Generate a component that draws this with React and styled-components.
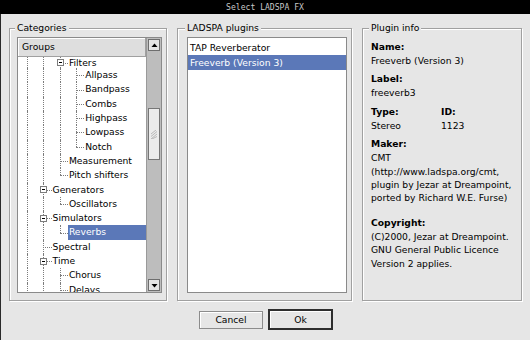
import React from 'react'
import styled, { createGlobalStyle } from 'styled-components'

const GlobalStyle = createGlobalStyle`
  html, body {
    margin: 0;
    padding: 0;
    background: #e6e6e6;
  }
  body {
    font-family: "DejaVu Sans", "Liberation Sans", sans-serif;
    font-size: 9.2px;
    color: #000;
  }
  #root {
    width: 530px;
    height: 340px;
    overflow: hidden;
  }
`

// the tree is scrolled, so the first visible row is partly hidden under the header
const tree = [
  { label: 'Filters', cols: ['line', 'line', 'open'], clipped: true },
  { label: 'Allpass', cols: ['line', 'line', 'line', 'tee'] },
  { label: 'Bandpass', cols: ['line', 'line', 'line', 'tee'] },
  { label: 'Combs', cols: ['line', 'line', 'line', 'tee'] },
  { label: 'Highpass', cols: ['line', 'line', 'line', 'tee'] },
  { label: 'Lowpass', cols: ['line', 'line', 'line', 'tee'] },
  { label: 'Notch', cols: ['line', 'line', 'line', 'end'] },
  { label: 'Measurement', cols: ['line', 'line', 'tee'] },
  { label: 'Pitch shifters', cols: ['line', 'line', 'end'] },
  { label: 'Generators', cols: ['line', 'open'] },
  { label: 'Oscillators', cols: ['line', 'line', 'end'] },
  { label: 'Simulators', cols: ['line', 'open'] },
  { label: 'Reverbs', cols: ['line', 'line', 'end'], selected: true },
  { label: 'Spectral', cols: ['line', 'tee'] },
  { label: 'Time', cols: ['line', 'open'] },
  { label: 'Chorus', cols: ['line', 'line', 'tee'] },
  { label: 'Delays', cols: ['line', 'line', 'tee'] },
]

const plugins = [
  { name: 'TAP Reverberator' },
  { name: 'Freeverb (Version 3)', selected: true },
]

function App() {
  return (
    <Window>
      <GlobalStyle />
      <TitleBar>Select LADSPA FX</TitleBar>
      <Body>
        <Panels>
          <Group $w={158} $pad="3px 4px 7px 7px">
            <Legend>Categories</Legend>
            <ListBox>
              <TreePane>
                <Header>Groups</Header>
                <TreeRows>
                  {tree.map((row) => (
                    <TreeRow key={row.label} $clipped={row.clipped}>
                      {row.cols.map((kind, i) => (
                        <Branch key={i} $kind={kind === 'open' ? 'tee' : kind}>
                          {kind === 'open' && <Expander />}
                        </Branch>
                      ))}
                      <NodeLabel $selected={row.selected}>{row.label}</NodeLabel>
                    </TreeRow>
                  ))}
                </TreeRows>
              </TreePane>
              <ScrollBar>
                <ScrollButton>
                  <svg width="7" height="5" viewBox="0 0 7 5">
                    <polygon points="3.5,0.5 6.5,4 0.5,4" fill="#000" />
                  </svg>
                </ScrollButton>
                <Thumb>
                  <svg width="6" height="9" viewBox="0 0 6 9">
                    <path d="M0 4 L5 0 M0 6.5 L6 1.5 M0 9 L6 4 M1 9 L6 6.5" stroke="#b8b8b8" strokeWidth="1" />
                  </svg>
                </Thumb>
                <ScrollSpace />
                <ScrollButton>
                  <svg width="7" height="5" viewBox="0 0 7 5">
                    <polygon points="0.5,1 6.5,1 3.5,4.5" fill="#000" />
                  </svg>
                </ScrollButton>
              </ScrollBar>
            </ListBox>
          </Group>

          <Group $w={175} $pad="3px 4px 7px 9px">
            <Legend>LADSPA plugins</Legend>
            <ListBox>
              <PluginList>
                {plugins.map((p) => (
                  <PluginRow key={p.name} $selected={p.selected}>{p.name}</PluginRow>
                ))}
              </PluginList>
            </ListBox>
          </Group>

          <Group $w={160} $pad="5px 6px 7px 8px">
            <Legend>Plugin info</Legend>
            <Info>
              <div>
                <FieldLabel>Name:</FieldLabel>
                <FieldValue>Freeverb (Version 3)</FieldValue>
              </div>
              <div>
                <FieldLabel>Label:</FieldLabel>
                <FieldValue>freeverb3</FieldValue>
              </div>
              <Pair>
                <FieldLabel>Type:</FieldLabel>
                <FieldLabel>ID:</FieldLabel>
                <FieldValue>Stereo</FieldValue>
                <FieldValue>1123</FieldValue>
              </Pair>
              <div>
                <FieldLabel>Maker:</FieldLabel>
                <FieldValue>
                  CMT<br />
                  (http://www.ladspa.org/cmt,<br />
                  plugin by Jezar at Dreampoint,<br />
                  ported by Richard W.E. Furse)
                </FieldValue>
              </div>
              <Field $spaced>
                <FieldLabel>Copyright:</FieldLabel>
                <FieldValue>
                  (C)2000, Jezar at Dreampoint.<br />
                  GNU General Public Licence<br />
                  Version 2 applies.
                </FieldValue>
              </Field>
            </Info>
          </Group>
        </Panels>

        <ButtonRow>
          <Button>Cancel</Button>
          <Button $default>Ok</Button>
        </ButtonRow>
      </Body>
    </Window>
  )
}

export default App

const Window = styled.div`
  width: 530px;
  height: 340px;
  display: flex;
  flex-direction: column;
  background: #e6e6e6;
`

const TitleBar = styled.div`
  height: 14px;
  flex-shrink: 0;
  background: #000;
  color: #c8c8c8;
  font-family: "DejaVu Sans Mono", monospace;
  font-size: 8.1px;
  line-height: 14px;
  text-align: center;
`

const Body = styled.div`
  flex: 1;
  display: flex;
  flex-direction: column;
  border-left: 1px solid #2a2a2a;
  padding: 8px 0 0 8px;
`

const Panels = styled.div`
  display: flex;
  gap: 10px;
  height: 279px;
`

const Group = styled.fieldset`
  margin: 0;
  min-width: 0;
  box-sizing: border-box;
  width: ${(p) => p.$w}px;
  flex-shrink: 0;
  padding: ${(p) => p.$pad};
  border: 1px solid #a0a0a0;
  box-shadow: inset 1px 1px 0 #fff, 1px 1px 0 #fff;
  display: flex;
  flex-direction: column;
`

const Legend = styled.legend`
  padding: 0 2px;
  margin-left: -2px;
  line-height: 12px;
  background: #e6e6e6;
`

const ListBox = styled.div`
  flex: 1;
  min-height: 0;
  display: flex;
  background: #fff;
  border: 1px solid #8a8a8a;
  overflow: hidden;
`

const TreePane = styled.div`
  flex: 1;
  min-width: 0;
  display: flex;
  flex-direction: column;
`

const Header = styled.div`
  height: 19px;
  flex-shrink: 0;
  box-sizing: border-box;
  padding-left: 4px;
  line-height: 18px;
  background: #dedede;
  border-right: 1px solid #a0a0a0;
  border-bottom: 1px solid #a0a0a0;
  box-shadow: inset 1px 1px 0 #fff;
`

const TreeRows = styled.div`
  flex: 1;
  min-height: 0;
  overflow: hidden;
  display: flex;
  flex-direction: column;
  padding-left: 1px;
`

const TreeRow = styled.div`
  display: flex;
  height: ${(p) => (p.$clipped ? '11.15px' : '14.3px')};
  line-height: ${(p) => (p.$clipped ? '11.15px' : '14.3px')};
  flex-shrink: 0;
`

const Branch = styled.span`
  position: relative;
  width: 16.3px;
  flex-shrink: 0;

  &::before {
    content: '';
    position: absolute;
    left: 8px;
    top: 0;
    bottom: ${(p) => (p.$kind === 'end' ? '50%' : '0')};
    border-left: 1px dotted #7c7c7c;
  }

  &::after {
    content: '';
    display: ${(p) => (p.$kind === 'line' ? 'none' : 'block')};
    position: absolute;
    left: 8px;
    right: 0;
    top: 50%;
    border-top: 1px dotted #7c7c7c;
  }
`

const Expander = styled.span`
  position: absolute;
  z-index: 1;
  left: 5px;
  top: 50%;
  margin-top: -3.5px;
  width: 7px;
  height: 7px;
  box-sizing: border-box;
  border: 1px solid #7c7c7c;
  background: #fff;

  &::before {
    content: '';
    position: absolute;
    left: 1px;
    right: 1px;
    top: 2px;
    height: 1px;
    background: #000;
  }
`

const NodeLabel = styled.span`
  flex: 1;
  padding-left: 1px;
  white-space: nowrap;
  background: ${(p) => (p.$selected ? '#5b78b8' : 'transparent')};
  color: ${(p) => (p.$selected ? '#fff' : '#000')};
`

const ScrollBar = styled.div`
  width: 15px;
  flex-shrink: 0;
  box-sizing: border-box;
  padding: 1px;
  display: flex;
  flex-direction: column;
  background: #bdbdbd;
  border-left: 1px solid #9a9a9a;
`

const ScrollButton = styled.div`
  height: 12px;
  flex-shrink: 0;
  box-sizing: border-box;
  display: flex;
  align-items: center;
  justify-content: center;
  background: #e6e6e6;
  border: 1px solid #6e6e6e;
`

const Thumb = styled.div`
  margin-top: 57px;
  height: 52px;
  flex-shrink: 0;
  box-sizing: border-box;
  display: flex;
  align-items: center;
  justify-content: center;
  background: #ececec;
  border: 1px solid #777;
`

const ScrollSpace = styled.div`
  flex: 1;
`

const PluginList = styled.div`
  flex: 1;
  padding-top: 2px;
  display: flex;
  flex-direction: column;
`

const PluginRow = styled.div`
  height: 15px;
  line-height: 15px;
  padding-left: 2px;
  white-space: nowrap;
  background: ${(p) => (p.$selected ? '#5b78b8' : 'transparent')};
  color: ${(p) => (p.$selected ? '#fff' : '#000')};
`

const Info = styled.div`
  display: flex;
  flex-direction: column;
  gap: 4px;
`

const Field = styled.div`
  margin-top: ${(p) => (p.$spaced ? '6px' : '0')};
`

const FieldLabel = styled.div`
  font-weight: bold;
  line-height: 15px;
`

const FieldValue = styled.div`
  line-height: 13.4px;
  white-space: nowrap;
`

const Pair = styled.div`
  display: grid;
  grid-template-columns: 70px 1fr;
`

const ButtonRow = styled.div`
  display: flex;
  justify-content: center;
  align-items: center;
  gap: 5px;
  margin-top: 8px;
  padding-right: 7px;
`

const Button = styled.button`
  font: inherit;
  color: #000;
  margin: 0;
  padding: 0;
  box-sizing: border-box;
  width: ${(p) => (p.$default ? '65px' : '64px')};
  height: ${(p) => (p.$default ? '21px' : '18px')};
  background: #e6e6e6;
  border: ${(p) => (p.$default ? '2px solid #2e2e2e' : '1px solid #8c8c8c')};
  box-shadow: inset 1px 1px 0 #fff;
`
